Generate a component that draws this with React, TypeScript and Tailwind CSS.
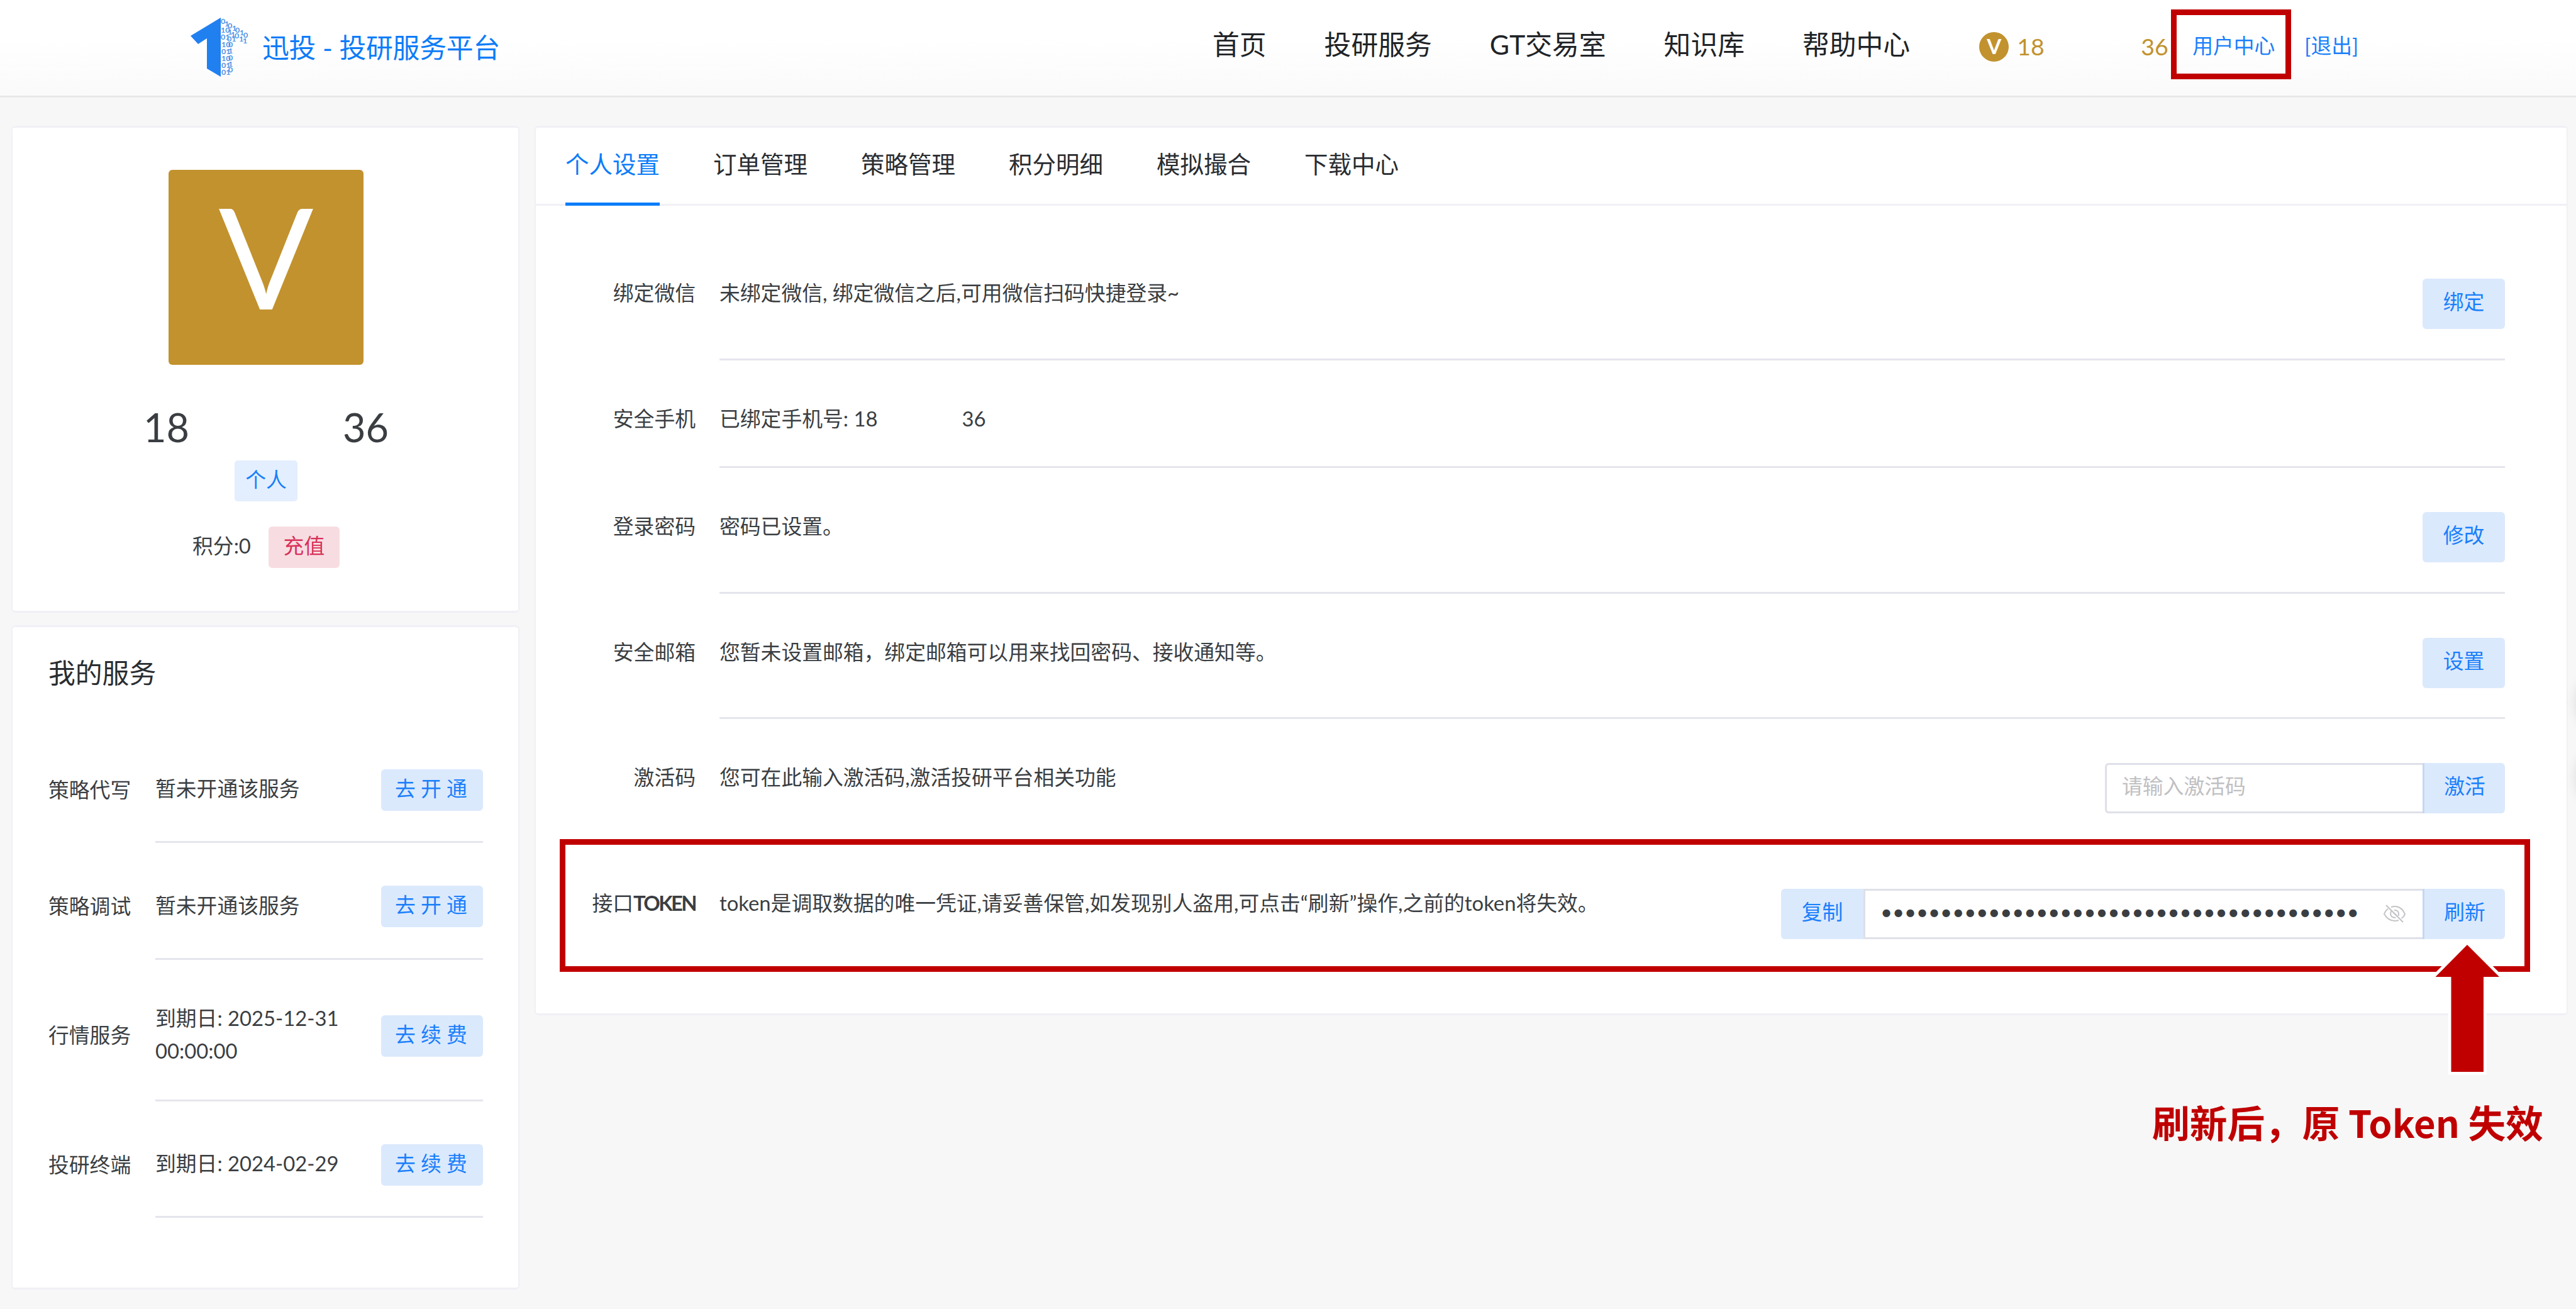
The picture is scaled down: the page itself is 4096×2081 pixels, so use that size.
import { useState } from 'react';

const FONT = "font-[Lato,'Noto_Sans_CJK_SC',sans-serif]";

const menu = ['首页', '投研服务', 'GT交易室', '知识库', '帮助中心'];

const tabs = ['个人设置', '订单管理', '策略管理', '积分明细', '模拟撮合', '下载中心'];

const servicios = [
  { nombre: '策略代写', texto: ['暂未开通该服务'], accion: '去开通', alto: 'h-[185.3px]' },
  { nombre: '策略调试', texto: ['暂未开通该服务'], accion: '去开通', alto: 'h-[185.3px]' },
  { nombre: '行情服务', texto: ['到期日: 2025-12-31', '00:00:00'], accion: '去续费', alto: 'h-[225.5px]' },
  { nombre: '投研终端', texto: ['到期日: 2024-02-29'], accion: '去续费', alto: 'h-[185.3px]' },
];

// Columnas de ceros y unos del lado derecho del logo
const bits = [
  { x: 50, y: 13, t: '0' }, { x: 56, y: 17, t: '1' }, { x: 61, y: 21, t: '0' }, { x: 68, y: 25, t: '1' }, { x: 73, y: 28, t: '0' }, { x: 80, y: 33, t: '1' }, { x: 86, y: 37, t: '0' },
  { x: 50, y: 28, t: '10' }, { x: 61, y: 32, t: '1' }, { x: 66, y: 36, t: '1' }, { x: 72, y: 39, t: '0' }, { x: 79, y: 44, t: '1' }, { x: 85, y: 48, t: '1' },
  { x: 50, y: 41, t: '01' }, { x: 60, y: 44, t: '01' },
  { x: 51, y: 54, t: '10' }, { x: 62, y: 54, t: '0' }, { x: 51, y: 67, t: '01' }, { x: 62, y: 66, t: '1' },
  { x: 51, y: 80, t: '10' }, { x: 62, y: 78, t: '0' }, { x: 51, y: 92, t: '01' }, { x: 62, y: 90, t: '1' }, { x: 51, y: 104, t: '01' }, { x: 62, y: 100, t: '0' },
];

function Logo() {
  return (
    <svg className="w-[94px] h-[96px] shrink-0 overflow-visible" viewBox="0 0 94 96">
      <path d="M49 1 L49 95 L27 82 L27 34 L13 43 L1 30 Z" fill="#2080f0" />
      <g fill="#4f94e6" fontSize="12.5" fontWeight="700" fontFamily="Lato" transform="translate(0 0) scale(1 0.88)">
        {bits.map((b, i) => (
          <text key={i} x={b.x - 1} y={b.y}>{b.t}</text>
        ))}
      </g>
    </svg>
  );
}

function EyeOff() {
  return (
    <svg className="w-[35px] h-[30px] shrink-0" viewBox="0 0 35 30" fill="none" stroke="#c4c4c8" strokeWidth="2">
      <path d="M7 6.500 C4 9 2 12 1 15 C5 22 11 26 18 26 C20 26 22 25.600 24 25" />
      <path d="M12 4 C14 3.300 16 3 18 3 C25 3 30.500 7.500 34 15 C33 18 31 20.500 28.500 22" />
      <path d="M13 10 C10.500 12 10.500 16 12.500 18.500 C14.500 20.500 17 21.200 19.500 20.500" />
      <path d="M17 9 C21 8.500 24 11 24 15 C24 16 23.700 17 23.200 18" />
      <path d="M15.500 12.500 L21 17.800" />
      <path d="M4 1 L31 28" />
    </svg>
  );
}

function Boton({ texto, lado = 'rounded-[6px]' }: { texto: string; lado?: string }) {
  return (
    <button className={`flex justify-center w-[131px] h-[80px] bg-[#dbe9fd] text-[#1a7ffb] leading-[74px] ${lado}`}>{texto}</button>
  );
}

function Fila({ label, texto, alto, borde = true, children }: any) {
  return (
    <div className={`flex ${alto}`}>
      <div className="w-[254px] pt-[69px] mr-[38px] text-right leading-[47px] whitespace-nowrap">{label}</div>
      <div className={`flex-1 flex justify-between items-start pt-[70px] ${borde ? 'border-b-[3px] border-[#e5e5ed]' : ''}`}>
        <div className="-mt-[1px] leading-[47px] whitespace-nowrap">{texto}</div>
        {children}
      </div>
    </div>
  );
}

export default function App() {
  const [activo, setActivo] = useState(0);
  const token = '•'.repeat(40);

  return (
    <div className={`relative w-[4096px] h-[2081px] overflow-hidden bg-[#f7f7f7] text-[32.8px] text-[#3a3e42] ${FONT}`}>

      {/* HEADER */}
      <header className="h-[155px] flex items-start border-b-[3px] border-[#e8e8e8] bg-linear-to-b from-white from-40% to-[#fafafa]">
        <div className="w-[1928px] flex items-start pl-[302px] pt-[27px]">
          <Logo />
          <span className="ml-[21px] mt-[20px] text-[42.8px] leading-[58px] tracking-[-0.2px] text-[#0c7cf8]">迅投 - 投研服务平台</span>
        </div>
        <nav className="flex gap-[92px] pt-[41px] text-[42.8px] leading-[59px] text-[#202327] whitespace-nowrap">
          {menu.map((m) => (
            <a key={m}>{m}</a>
          ))}
        </nav>
        <div className="flex items-center ml-[110px] pt-[42px] h-[106px] whitespace-nowrap">
          <span className="w-[47px] h-[47px] rounded-full bg-[#c2922e] text-white text-[33px] font-bold leading-[44px] text-center">V</span>
          <span className="ml-[13px] w-[42px] text-[37.5px] leading-[60px] text-[#c2922e]">18</span>
          <span className="w-[155px] h-[60px]"></span>
          <span className="w-[42px] text-[37.5px] leading-[60px] text-[#c2922e]">36</span>
          <a className="ml-[40px] pb-[2px] text-[#1a7ffb] leading-[58px]">用户中心</a>
          <a className="ml-[47px] pb-[2px] text-[#1a7ffb] leading-[58px]">[退出]</a>
        </div>
      </header>

      <div className="flex items-start pt-[45px] pl-[18px] gap-[24px]">

        {/* COLUMNA IZQUIERDA */}
        <aside className="w-[808px] flex flex-col gap-[20px]">
          <section className="h-[774px] pl-[2px] flex flex-col items-center rounded-[6px] border-y-[3px] border-x-2 border-[#f0f0f6] bg-white">
            <div className="mt-[67px] w-[310px] h-[310px] rounded-[6px] bg-[#c2922e] text-white text-[223px] leading-[271px] text-center">V</div>
            <div className="mt-[64px] flex w-[390px] justify-between text-[63px] leading-[70px]">
              <span>18</span>
              <span>36</span>
            </div>
            <span className="mt-[18px] w-[100px] h-[65px] rounded-[5px] bg-[#e3effe] text-[#1a7ffb] text-center leading-[62px]">个人</span>
            <div className="mt-[40px] flex items-center">
              <span className="mb-[4px] leading-[60px]">积分:0</span>
              <button className="flex justify-center ml-[28px] w-[113px] h-[66px] rounded-[6px] bg-[#f7dde2] text-[#d9315a] leading-[61px]">充值</button>
            </div>
          </section>

          <section className="h-[1056px] pl-[57px] pr-[56px] rounded-[6px] border-y-[3px] border-x-2 border-[#f0f0f6] bg-white">
            <h3 className="pt-[43px] h-[158px] text-[42.8px] leading-[60px] text-[#2a2d31]">我的服务</h3>
            {servicios.map((s) => (
              <div key={s.nombre} className={`flex ${s.alto}`}>
                <div className="w-[170px] flex items-center pt-[15px]">{s.nombre}</div>
                <div className="flex-1 flex items-center justify-between pt-[16px] border-b-[3px] border-[#e5e5ed]">
                  <div className="leading-[51.500px] whitespace-nowrap">
                    {s.texto.map((t) => (
                      <p key={t}>{t}</p>
                    ))}
                  </div>
                  <button className="flex mt-[4px] w-[162px] h-[66px] pl-[22px] rounded-[6px] bg-[#dbe9fd] text-[#1a7ffb] tracking-[8.200px] leading-[61px] whitespace-nowrap">{s.accion}</button>
                </div>
              </div>
            ))}
          </section>
        </aside>

        {/* PANEL PRINCIPAL */}
        <main className="w-[3233px] h-[1414px] rounded-[6px] border-y-[3px] border-x-2 border-[#f0f0f6] bg-white">
          <div className="flex h-[124px] pl-[47px] gap-[85px] border-b-[3px] border-[#f0f0f6] text-[37.5px] text-[#2a2d31]">
            {tabs.map((t, i) => (
              <button
                key={t}
                onClick={() => setActivo(i)}
                className={`h-[124px] pb-[3px] border-b-[5px] ${activo === i ? 'border-[#0c7cf8] text-[#0c7cf8]' : 'border-transparent'}`}
              >
                {t}
              </button>
            ))}
          </div>

          <div className="pt-[46px] pr-[98px]">
            <Fila label="绑定微信" texto="未绑定微信, 绑定微信之后,可用微信扫码快捷登录~" alto="h-[199.500px]">
              <Boton texto="绑定" />
            </Fila>
            <Fila
              label="安全手机"
              texto={<>已绑定手机号: 18<span className="inline-block w-[134px]"></span>36</>}
              alto="h-[171.500px]"
            />
            <Fila label="登录密码" texto="密码已设置。" alto="h-[199.500px]">
              <Boton texto="修改" />
            </Fila>
            <Fila label="安全邮箱" texto="您暂未设置邮箱，绑定邮箱可以用来找回密码、接收通知等。" alto="h-[199.500px]">
              <Boton texto="设置" />
            </Fila>
            <Fila label="激活码" texto="您可在此输入激活码,激活投研平台相关功能" alto="h-[199.500px]">
              <div className="flex">
                <div className="w-[505px] h-[80px] pl-[24px] border-y-[3px] border-l-[3px] border-[#dfe0e8] rounded-l-[6px] text-[#bfc0c2] leading-[68px]">请输入激活码</div>
                <Boton texto="激活" lado="rounded-r-[6px] border-l-[3px] border-[#c5d8f2]" />
              </div>
            </Fila>
            <Fila
              label={<>接口<span className="font-bold tracking-[-2.600px]">TOKEN</span></>}
              texto="token是调取数据的唯一凭证,请妥善保管,如发现别人盗用,可点击“刷新”操作,之前的token将失效。"
              alto="h-[199.500px]"
              borde={false}
            >
              <div className="flex">
                <Boton texto="复制" lado="rounded-l-[6px]" />
                <div className="w-[889px] h-[80px] pl-[24px] pr-[27px] flex items-center justify-between border-y-[3px] border-l-[3px] border-[#dfe0e8] leading-[74px]">
                  <span className="mb-[6px]">{token}</span>
                  <EyeOff />
                </div>
                <Boton texto="刷新" lado="rounded-r-[6px] border-l-[3px] border-[#c5d8f2]" />
              </div>
            </Fila>
          </div>
        </main>
      </div>

      {/* ANOTACIONES EN ROJO */}
      <div className="absolute left-[3452px] top-[15px] w-[191px] h-[111px] border-[9px] border-[#c00000]"></div>
      <div className="absolute left-[890px] top-[1334px] w-[3133px] h-[211px] border-[9px] border-[#c00000]"></div>
      <svg className="absolute left-[3863px] top-[1489px] w-[120px] h-[226px]" viewBox="0 0 120 226">
        <path d="M60 13 L111 64 L86 64 L86 215 L34.500 215 L34.500 64 L9.500 64 Z" fill="#c00000" stroke="#ffffff" strokeWidth="9.500" paintOrder="stroke" />
      </svg>
      <p className="absolute left-[3422px] top-[1738px] text-[59.7px] leading-[90px] font-bold text-[#c00000] whitespace-nowrap font-['Noto_Sans_CJK_SC',sans-serif]">刷新后，原 Token 失效</p>

      {/* Sombra de los botones flotantes fuera de pantalla */}
      <div className="absolute left-[4098px] top-[1067px] w-[100px] h-[100px] rounded-full shadow-[0_0_20px_rgba(0,0,0,0.14)]"></div>
      <div className="absolute left-[4098px] top-[1185px] w-[100px] h-[100px] rounded-full shadow-[0_0_20px_rgba(0,0,0,0.14)]"></div>
    </div>
  );
}
